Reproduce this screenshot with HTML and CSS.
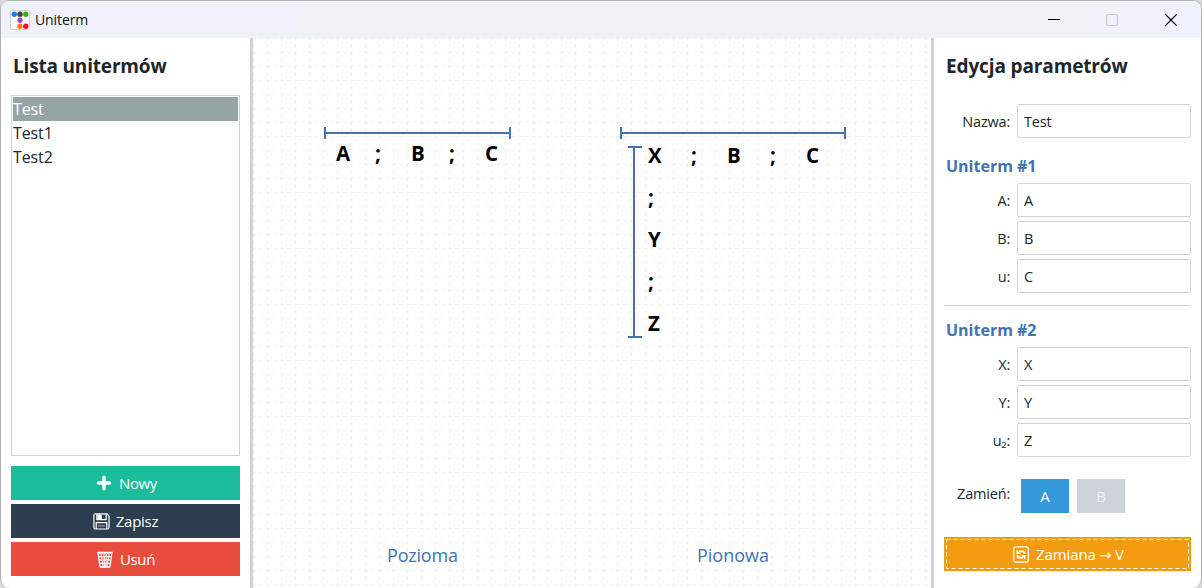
FILE: index.html
```html
<!DOCTYPE html>
<html lang="pl">
<head>
<meta charset="utf-8">
<title>Uniterm</title>
<link rel="stylesheet" href="styles.css">
</head>
<body>
<div class="window">
  <header class="titlebar">
    <svg class="app-icon" width="20" height="20" viewBox="0 0 20 20">
      <rect x=".5" y=".5" width="19" height="19" rx="2" fill="#fff" stroke="#d3d3d6"/>
      <circle cx="4.3" cy="4.3" r="2.7" fill="#1f7de6"/>
      <circle cx="10" cy="4.3" r="2.7" fill="#3d434b"/>
      <circle cx="15.8" cy="4.3" r="2.7" fill="#3bb30f"/>
      <circle cx="10" cy="10.3" r="2.7" fill="#9b52c0"/>
      <circle cx="10" cy="16.3" r="2.7" fill="#ff7a12"/>
      <circle cx="15.8" cy="16.3" r="2.7" fill="#ff0a3c"/>
    </svg>
    <span class="app-name">Uniterm</span>
    <div class="window-buttons">
      <svg width="12" height="12" viewBox="0 0 12 12"><path d="M0 5.5H12" stroke="#000"/></svg>
      <svg width="12" height="12" viewBox="0 0 12 12"><rect x=".5" y=".5" width="11" height="11" rx="1" fill="none" stroke="#c2c3c8"/></svg>
      <svg width="12" height="12" viewBox="0 0 12 12"><path d="M.4 .4L11.6 11.6M11.6 .4L.4 11.6" stroke="#000" stroke-width="1.2"/></svg>
    </div>
  </header>
  <main class="content">
    <aside class="sidebar">
      <h2 class="panel-title">Lista unitermów</h2>
      <ul class="term-list">
        <li class="term selected">Test</li>
        <li class="term">Test1</li>
        <li class="term">Test2</li>
      </ul>
      <div class="actions">
        <button class="button create">
          <svg width="16" height="16" viewBox="0 0 16 16"><path d="M8 2.300V13.700M2.300 8H13.700" stroke="#fff" stroke-width="3.400" stroke-linecap="round"/></svg>
          <span>Nowy</span>
        </button>
        <button class="button save">
          <svg width="17" height="17" viewBox="0 0 17 17" fill="none" stroke="#fff" stroke-width="1.2"><path d="M2.5 .8H14L16 3V14.5Q16 16 14.5 16H2.5Q.9 16 .9 14.5V2.3Q.9 .8 2.5 .8Z"/><path d="M3.8 1V6.6H13.2V1M3.2 16V9.7H13.8V16"/><path d="M4.3 1.4H8.8V6H4.3Z" fill="#fff" stroke="none"/><path d="M4.8 12.8H12.2" stroke-opacity=".45"/></svg>
          <span>Zapisz</span>
        </button>
        <button class="button remove">
          <svg width="16" height="17" viewBox="0 0 16 17" fill="none" stroke="#fff"><path d="M.3 1.8H15.7" stroke-width="2"/><path d="M1.3 3L3 15.6H13L14.7 3" stroke-width="1.3"/><path d="M3 16H13" stroke-width="1.6"/><path d="M4.2 3L6 15M7 3L7.4 15M9.3 3L8.8 15M12 3L10.2 15" stroke-width="1.1"/><path d="M2 5.6H14M2.4 9H13.6M3 12.4H13" stroke-width="1.2"/></svg>
          <span>Usuń</span>
        </button>
      </div>
    </aside>
    <section class="board">
      <svg class="diagram" width="678" height="550" viewBox="253 38 678 550">
        <defs>
          <pattern id="grid" x="253" y="38" width="14" height="14" patternUnits="userSpaceOnUse">
            <path d="M0 .5H3M6 .5H10M13 .5H14M.5 0V3M.5 6V10M.5 13V14" stroke="#f0f0f1"/>
          </pattern>
        </defs>
        <rect x="253" y="38" width="678" height="550" fill="url(#grid)"/>
        <g class="bar">
          <path d="M325 133H510M325 127V139M510 127V139"/>
          <path d="M621 133H845M621 127V139M845 127V139"/>
          <path d="M634 147V337M628 147H642M628 337H642"/>
        </g>
        <g class="symbol">
          <text x="336" y="161">A</text><text x="375" y="161">;</text><text x="411" y="161">B</text><text x="449" y="161">;</text><text x="485" y="161">C</text>
          <text x="648" y="163">X</text><text x="691" y="163">;</text><text x="727" y="163">B</text><text x="770" y="163">;</text><text x="806" y="163">C</text>
          <text x="648" y="205">;</text><text x="648" y="247">Y</text><text x="648" y="289">;</text><text x="648" y="331">Z</text>
        </g>
        <g class="caption">
          <text x="387" y="562" textLength="71">Pozioma</text>
          <text x="697" y="562" textLength="72">Pionowa</text>
        </g>
      </svg>
    </section>
    <aside class="editor">
      <h2 class="panel-title editor-title">Edycja parametrów</h2>
      <label class="field"><span class="label">Nazwa:</span><input class="input" value="Test"></label>
      <h3 class="group-title first">Uniterm #1</h3>
      <div class="fields">
        <label class="field"><span class="label">A:</span><input class="input" value="A"></label>
        <label class="field"><span class="label">B:</span><input class="input" value="B"></label>
        <label class="field"><span class="label">u:</span><input class="input" value="C"></label>
      </div>
      <hr class="divider">
      <h3 class="group-title">Uniterm #2</h3>
      <div class="fields">
        <label class="field"><span class="label">X:</span><input class="input" value="X"></label>
        <label class="field"><span class="label">Y:</span><input class="input" value="Y"></label>
        <label class="field"><span class="label">u₂:</span><input class="input" value="Z"></label>
      </div>
      <div class="swap">
        <span class="label swap-label">Zamień:</span>
        <button class="choice active">A</button>
        <button class="choice">B</button>
      </div>
      <button class="button convert">
        <svg class="focus-ring" width="243" height="30" viewBox="0 0 243 30"><rect x=".5" y=".5" width="242" height="29" fill="none" stroke="#fff" stroke-dasharray="4 3"/></svg>
        <svg width="16" height="17" viewBox="0 0 16 17" fill="none" stroke="#fff"><rect x=".7" y=".8" width="14.6" height="15.4" rx="2" stroke-width="1.2"/><path d="M11.500 8V7.200Q11.300 5.400 9.500 5.400H6M4.500 9V9.800Q4.700 11.600 6.500 11.600H10" stroke-width="1.9"/><path d="M3.500 3.500V8H8ZM12.500 13.500V9H8Z" fill="#fff" stroke="none"/></svg>
        <span>Zamiana <span class="arrow">→</span> V</span>
      </button>
    </aside>
  </main>
</div>
</body>
</html>
```
FILE: styles.css
```css
* { box-sizing: border-box; }
body { margin: 0; background: #d9d9d9; font-family: "Open Sans", "Noto Sans", sans-serif; color: #212529; }
h2, h3, ul { margin: 0; padding: 0; }
button, input { font-family: inherit; color: inherit; margin: 0; }
.window { width: 1202px; height: 588px; border: 1px solid #b0b0b0; border-bottom: 0; border-radius: 9px; background: #fff; overflow: hidden; display: flex; flex-direction: column; }
.titlebar { height: 37px; flex: none; background: linear-gradient(90deg, #eff2fa, #f1f2f7 60%, #f1f2f7 85%, #eef2fc); display: flex; align-items: center; padding-left: 9px; }
.app-name { margin-left: 5px; font-size: 14px; letter-spacing: -0.1px; color: #111; flex: 1; }
.window-buttons { display: flex; padding-right: 24px; }
.window-buttons svg { display: block; margin-left: 47px; }
.window-buttons svg:nth-child(2) { margin-left: 46px; }
.content { flex: 1; display: flex; min-height: 0; }
.sidebar { width: 252px; border-right: 3px solid #ced2d9; padding: 14px 10px 12px; display: flex; flex-direction: column; }
.panel-title { font-size: 19px; font-weight: 700; line-height: 28px; letter-spacing: -0.18px; padding-left: 2px; white-space: nowrap; }
.term-list { flex: 1; list-style: none; margin: 15px 0 10px; border: 1px solid #ced2d9; padding: 1px; }
.term { height: 24px; line-height: 24px; font-size: 16px; letter-spacing: -0.1px; }
.selected { background: #95a5a6; color: #fff; }
.actions { display: flex; flex-direction: column; gap: 4px; }
.button { height: 34px; border: 0; padding: 0; color: #fff; font-size: 15px; letter-spacing: -0.4px; display: flex; align-items: center; justify-content: center; gap: 7px; }
.create { background: #1abc9c; padding-left: 2px; }
.save { background: #2c3e50; gap: 6px; letter-spacing: -0.25px; }
.remove { background: #e74c3c; padding-left: 1px; }
.board { width: 678px; }
.diagram { display: block; }
.bar { stroke: #4272b0; stroke-width: 2; fill: none; }
.symbol { font-size: 20.5px; font-weight: 700; fill: #000; }
.caption { font-size: 18px; fill: #4272b0; }
.editor { flex: 1; border-left: 3px solid #ced2d9; padding: 14px 10px 0; display: flex; flex-direction: column; }
.editor-title { margin-bottom: 24px; letter-spacing: -0.13px; }
.field { display: flex; align-items: center; gap: 7px; }
.label { width: 66px; text-align: right; font-size: 14.5px; letter-spacing: -0.2px; white-space: nowrap; }
.input { width: 174px; height: 34px; border: 1px solid #ced2d9; border-radius: 2px; padding: 0 6px; font-size: 14.5px; letter-spacing: -0.15px; }
.group-title { font-size: 16px; font-weight: 700; line-height: 24px; color: #4272b0; padding-left: 2px; margin-bottom: 5px; }
.first { margin-top: 16px; }
.fields { display: flex; flex-direction: column; gap: 4px; }
.divider { width: 100%; border: 0; height: 1px; background: #ced2d9; margin: 12px 0; }
.swap { display: flex; margin-top: 22px; gap: 8px; }
.swap-label { margin-right: 3px; line-height: 30px; }
.choice { width: 48px; height: 34px; border: 0; padding: 0; background: #ced2d9; color: #f3f4f6; font-size: 15px; }
.active { background: #3498db; color: #fff; }
.convert { margin-top: 24px; background: #f39c12; position: relative; padding-left: 2px; letter-spacing: -0.1px; }
.focus-ring { position: absolute; left: 2px; top: 2px; }
.arrow { font-family: "DejaVu Sans", sans-serif; font-size: 14px; }
```
